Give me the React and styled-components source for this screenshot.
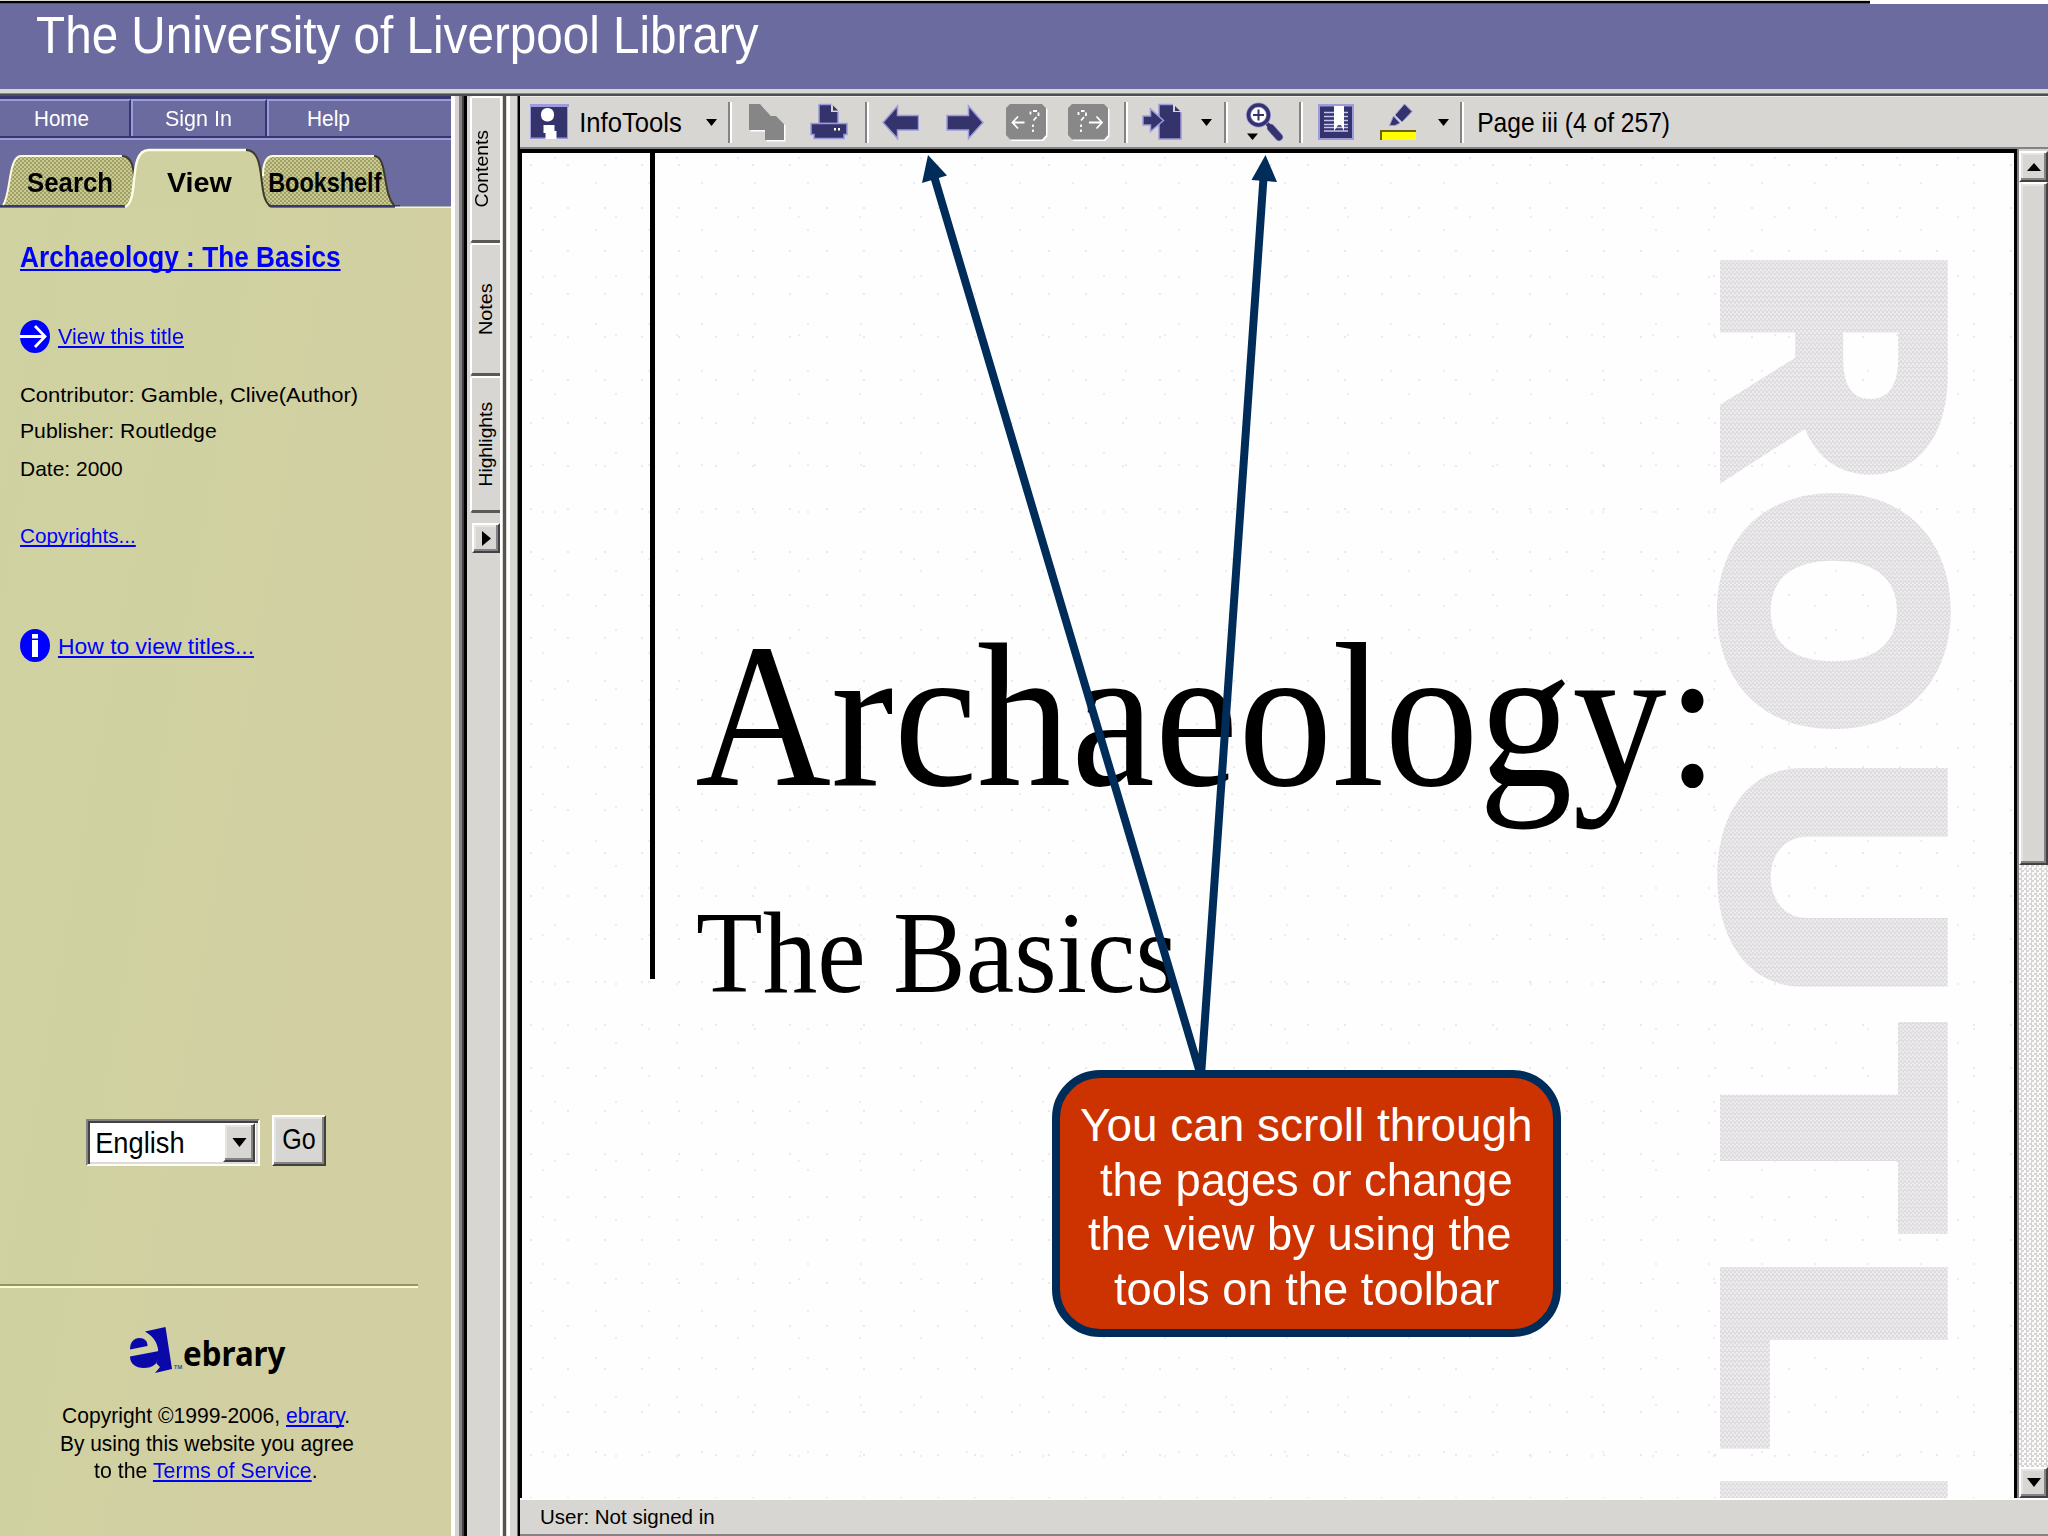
import React, { useLayoutEffect, useRef } from 'react'
import styled, { createGlobalStyle, css } from 'styled-components'

const NAVY = '#35336b'
const LILAC = '#9c9bdc'
const FACE = '#d8d6d2'
const PURPLE = '#6b6ba0'
const INK = '#002c5a'

const GlobalStyle = createGlobalStyle`
* {
    box-sizing: border-box;
}
body {
    margin: 0;
    width: 2048px;
    height: 1536px;
    overflow: hidden;
    font-family: 'Liberation Sans', Arial, sans-serif;
    color: #000000;
}
`

/* ---------- text squeezed to a fixed width ---------- */

const FitBox = styled.div`
flex: none;
width: ${props => props.$w}px;
height: ${props => props.$lh}px;
margin-top: ${props => props.$mt || 0}px;
margin-left: ${props => props.$ml || 0}px;
`
const FitText = styled.span`
display: inline-block;
white-space: pre;
transform-origin: 0 0;
font-size: ${props => props.$size}px;
line-height: ${props => props.$lh}px;
font-weight: ${props => props.$bold ? 700 : 400};
`

const Fit = ({ w, size, lh, mt, ml, bold, children }) => {
    const ref = useRef(null)
    useLayoutEffect(() => {
        const el = ref.current
        const cs = getComputedStyle(el)
        const ctx = document.createElement('canvas').getContext('2d')
        ctx.font = `${cs.fontWeight} ${cs.fontSize} ${cs.fontFamily}`
        const m = ctx.measureText(el.textContent)
        const k = w / (m.actualBoundingBoxLeft + m.actualBoundingBoxRight)
        el.style.transform = `translateX(${m.actualBoundingBoxLeft * k}px) scaleX(${k})`
    }, [w, children])
    return (
        <FitBox $w={w} $lh={lh} $mt={mt} $ml={ml}>
            <FitText ref={ref} $size={size} $lh={lh} $bold={bold}>{children}</FitText>
        </FitBox>
    )
}

/* ---------- page frame ---------- */

const Screen = styled.div`
position: relative;
display: flex;
flex-direction: column;
width: 2048px;
height: 1536px;
overflow: hidden;
background-color: ${FACE};
`
const TopEdge = styled.div`
height: 4px;
background: linear-gradient(#d9d9d4 0 1.5px, #000000 1.5px 3px, #55557c 3px) 0 0 / 1870px 4px no-repeat #ffffff;
`
const Header = styled.header`
height: 85px;
padding-top: 2px;
background-color: ${PURPLE};
color: #ffffff;
`
const Ridge = styled.div`
height: 7px;
background: linear-gradient(#d6d6d2 0 4px, #868884 4px 5.5px, #4c4f4c 5.5px 7px);
`
const Body = styled.div`
display: flex;
flex: 1;
min-height: 0;
`
const OuterDivider = styled.div`
width: 16px;
background: linear-gradient(90deg, #ffffff 0 4px, #d6d3d2 4px 8px, #848284 8px 11px, #424142 11px 13px, #000000 13px);
`
const InnerDivider = styled.div`
width: 18px;
background: linear-gradient(90deg, ${FACE} 0 1px, #55544f 1px 4px, ${FACE} 4px 5px, #ffffff 5px 8px, ${FACE} 8px 15px, #73716f 15px 16px, #000000 16px);
`

/* ---------- sidebar ---------- */

const Sidebar = styled.aside`
display: flex;
flex-direction: column;
width: 451px;
background: linear-gradient(100deg, #cfd3a0, #d2cfa3 80%);
`
const Nav = styled.nav`
display: flex;
height: 44px;
color: #ffffff;
background-color: ${PURPLE};
border-top: 3px solid #37376f;
border-bottom: 2px solid ${LILAC};
`
const NavItem = styled.div`
width: ${props => props.$w}px;
border-top: 2px solid ${LILAC};
border-bottom: 2px solid #37376f;
${props => !props.$last && css`
    border-right: 2px solid #37376f;
    box-shadow: 2px 0 0 ${LILAC};
`}
`
const TabBar = styled.div`
position: relative;
display: flex;
height: 68px;
background-color: ${PURPLE};
`
const TabShapes = styled.svg`
position: absolute;
left: 0;
top: 0;
`
const TabLabels = styled.div`
position: relative;
display: flex;
padding-left: 27px;
`
const Info = styled.div`
display: flex;
flex-direction: column;
padding-left: 20px;
`
const IconLink = styled.div`
display: flex;
height: 33px;
gap: 8px;
margin-top: ${props => props.$mt}px;
`
const Link = styled.a`
color: #0000ff;
text-decoration: underline;
text-decoration-thickness: 2px;
text-underline-offset: 2px;
text-decoration-skip-ink: none;
`
const LanguageForm = styled.div`
display: flex;
align-items: flex-end;
gap: 12px;
margin-top: 453px;
padding-left: 86px;
`
const Select = styled.div`
display: flex;
justify-content: space-between;
width: 174px;
height: 47px;
background-color: #ffffff;
border: 2px solid;
border-color: #848284 #ffffff #ffffff #848284;
box-shadow: inset 2px 2px 0 #424142, inset -2px -2px 0 #dedbd6;
padding: 2px 3px 2px 2px;
`
const Bevel = styled.div`
display: flex;
flex: none;
align-items: center;
justify-content: center;
width: ${props => props.$w}px;
height: ${props => props.$h}px;
background-color: ${FACE};
border: 2px solid;
border-color: #ffffff #424142 #424142 #ffffff;
box-shadow: inset -2px -2px 0 #848284, inset 2px 2px 0 #e6e4e0;
`
const Rule = styled.div`
width: 418px;
height: 4px;
margin-top: 118px;
background: linear-gradient(#94936a 0 2px, #fdfdc8 2px);
`
const Brand = styled.div`
display: flex;
height: 48px;
margin-top: 39px;
padding-left: 130px;
font-family: 'Noto Sans', 'Open Sans', sans-serif;
`
const Legal = styled.div`
margin-top: 28px;
`

/* ---------- rail with the vertical tabs ---------- */

const Rail = styled.div`
display: flex;
flex-direction: column;
width: 35px;
padding-left: 3px;
border-right: 2px solid #ffffff;
`
const RailTab = styled.div`
display: flex;
align-items: center;
justify-content: center;
width: 30px;
height: ${props => props.$h}px;
padding-right: ${props => props.$pr || 0}px;
border-left: 2px solid #ffffff;
border-top: 2px solid #ffffff;
border-bottom: 3px solid #5a5955;
border-radius: 3px 0 0 3px;
`
const Turned = styled.div`
flex: none;
transform: rotate(-90deg);
`
const RailButton = styled.div`
margin: 10px 0 0 2px;
`

/* ---------- main pane ---------- */

const Main = styled.main`
display: flex;
flex-direction: column;
width: 1528px;
`
const Toolbar = styled.div`
display: flex;
align-items: center;
height: 53px;
border-top: 1px solid #eeede9;
border-bottom: 2px solid #848284;
`
const Tool = styled.div`
display: flex;
flex: none;
margin-left: ${props => props.$ml}px;
`
const Separator = styled.div`
flex: none;
width: 4px;
height: 41px;
margin-left: ${props => props.$ml}px;
background: linear-gradient(90deg, #848284 0 2px, #ffffff 2px);
`
const Viewer = styled.div`
display: flex;
height: 1349px;
`
const Sheet = styled.div`
position: relative;
width: 1497px;
overflow: hidden;
border: solid #000000;
border-width: 4px 3px 0 2px;
background-color: #fefefe;
background-image:
    radial-gradient(circle at 9px 12px, #ebe9eb 0 1px, transparent 1.6px),
    radial-gradient(circle at 21px 30px, #efedef 0 1px, transparent 1.6px),
    radial-gradient(circle at 33px 5px, #efedef 0 1px, transparent 1.6px);
background-size: 37px 43px, 53px 47px, 61px 59px;
`
const TitleBlock = styled.div`
width: 133px;
height: 826px;
border-right: 5px solid #000000;
`
const Titles = styled.div`
position: absolute;
left: 175px;
top: 443px;
font-family: 'Liberation Serif', 'Times New Roman', serif;
`
const Imprint = styled.div`
position: absolute;
left: 1502px;
top: 107px;
display: flex;
transform-origin: 0 0;
transform: rotate(90deg);
font-family: Inter, sans-serif;
& span {
    font-weight: 900;
    color: transparent;
    background: repeating-conic-gradient(#dedcdf 0 25%, #efedf0 0 50%) 0 0 / 4px 4px;
    background-clip: text;
    -webkit-background-clip: text;
}
`
const ScrollBar = styled.div`
display: flex;
flex-direction: column;
width: 31px;
padding-top: 2px;
border-left: 2px solid #848284;
`
const Thumb = styled(Bevel)`
height: 683px;
`
const Track = styled.div`
flex: 1;
background: repeating-conic-gradient(#d9d5d4 0 25%, #fdfcfc 0 50%) 0 0 / 5px 5px;
`
const StatusBar = styled.footer`
height: 38px;
padding-left: 21px;
border-top: 2px solid #ffffff;
border-bottom: 2px solid #848284;
`

/* ---------- callout ---------- */

const Arrows = styled.svg`
position: absolute;
left: 0;
top: 0;
`
const Callout = styled.div`
position: absolute;
left: 1052px;
top: 1070px;
width: 509px;
height: 267px;
padding: 20px 0 0 21px;
color: #ffffff;
background-color: #cc3300;
border: 8px solid ${INK};
border-radius: 48px;
`

/* ---------- icons ---------- */

const Caret = ({ w = 11, h = 7 }) => (
    <svg width={w} height={h} viewBox="0 0 11 7"><path d="M0 0h11L5.5 7z" /></svg>
)

const ToolIcon = ({ w, children }) => (
    <svg width={w} height="40" viewBox={`0 0 ${w} 40`}>{children}</svg>
)

const InfoToolsIcon = () => (
    <ToolIcon w={39}>
        <path fill={LILAC} d="M0 2h39v3h-1v32H0z" />
        <path fill={NAVY} d="M1 5h36v30.500H1z" />
        <rect x="11" y="6" width="13" height="13.500" rx="6" fill="#fff" />
        <path fill="#fff" d="M13.500 23h11v6h2v8h-11v-6h-2z" />
    </ToolIcon>
)

const copyShape = 'M0 2h11l11 12h5l8 8v16H16V28H0z'
const CopyIcon = () => (
    <ToolIcon w={37}>
        <path fill="#fff" transform="translate(1.500 1.500)" d={copyShape} />
        <path fill="#868686" d={copyShape} />
    </ToolIcon>
)

const PrintIcon = () => (
    <ToolIcon w={38}>
        <g fill={NAVY} stroke={LILAC} strokeWidth="1.500">
            <path d="M9 2.500h12l7 7v12H9z" />
            <path d="M1 21.500h36v11h-3v4H4v-4H1z" />
        </g>
        <path fill={FACE} d="M21 2v8h8z" />
        <path fill={NAVY} d="M23 3.500v5h5z" />
        <path fill="#fff" d="M24 26h2v2.500h-2zM28 26h2v2.500h-2z" />
    </ToolIcon>
)

const BackIcon = () => (
    <ToolIcon w={37}>
        <path fill={NAVY} stroke={LILAC} strokeWidth="1.500" d="M1 20.500L15.500 4v9.500H36.500V28H15.500v8.500z" />
    </ToolIcon>
)

const ForwardIcon = () => (
    <ToolIcon w={38}>
        <path fill={NAVY} stroke={LILAC} strokeWidth="1.500" d="M37 20.500L22.500 4v9.500H1V28h21.500v8.500z" />
    </ToolIcon>
)

const boxShape = 'M4 2h32l4 4v27l-4 4.500H4L0 33V6z'
const QueryIcon = ({ forward }) => (
    <ToolIcon w={42}>
        <path fill="#fff" transform="translate(1.500 1.500)" d={boxShape} />
        <path fill="#888888" d={boxShape} />
        {forward
            ? <path fill="none" stroke="#fff" strokeWidth="1.800" d="M21 20.500h13M28.500 14.500l5.500 6-5.500 6M10.500 10v3M13 9h3.500M18 10.500v3.500M16 15l-3 3.500M13 22.500v2.500M13 27.500v2.500" />
            : <path fill="none" stroke="#fff" strokeWidth="1.800" d="M6.500 20.500h12M12 14.500l-5.500 6 5.500 6M24.500 9.500v3M27 9h4M32.500 10.500v3.500M30.500 15l-3 3.500M27 22.500v2.500M27 27.500v2.500" />}
    </ToolIcon>
)

const GotoIcon = () => (
    <ToolIcon w={40}>
        <path fill={NAVY} stroke={LILAC} strokeWidth="1.500" d="M17 2.500h14l8 8V37H17z" />
        <path fill={FACE} d="M31 1v9h9V1z" />
        <path fill={NAVY} d="M33 4v5h5z" />
        <path fill={NAVY} stroke={LILAC} strokeWidth="1.500" d="M1 14h7.500V7L21.500 18.500 8.500 29.500V23H1z" />
    </ToolIcon>
)

const ZoomIcon = () => (
    <ToolIcon w={38}>
        <path stroke={LILAC} strokeWidth="8.500" strokeLinecap="round" d="M25 26l8 9" />
        <path stroke={NAVY} strokeWidth="7" strokeLinecap="round" d="M25 26l8 9" />
        <path stroke={NAVY} strokeWidth="4" d="M19 19l5 6" />
        <circle cx="12.500" cy="13" r="10" fill="#fff" stroke={LILAC} strokeWidth="5" />
        <circle cx="12.500" cy="13" r="10" fill="none" stroke={NAVY} strokeWidth="3.500" />
        <path stroke={NAVY} strokeWidth="2" d="M7 13h11M12.500 7.500v11" />
        <path d="M1 31.500h11L6.500 38z" />
    </ToolIcon>
)

const BookmarkIcon = () => (
    <ToolIcon w={36}>
        <path fill={LILAC} d="M0 2h36v36H0z" />
        <path fill={NAVY} d="M2 4.500h32v31.500H2z" />
        <path stroke="#c4c4f2" strokeWidth="1.500" d="M6 10.500h24M6 14.500h24M6 18.500h24M6 22.500h24M6 25.500h24M6 29h24" />
        <path fill="#fff" d="M16 4h10v25l-3-6h-3l-4 6z" />
    </ToolIcon>
)

const HighlightIcon = () => (
    <ToolIcon w={36}>
        <path fill={NAVY} stroke={LILAC} strokeWidth="1" d="M24.500 2l7.500 7.500L22 20l-7-7z" />
        <path fill={NAVY} stroke={LILAC} strokeWidth="1" d="M13.500 14l6.500 7-5 2.500H9.500z" />
        <path fill="#6e6410" d="M0 28h36v10H0z" />
        <path fill="#ffff00" d="M2 30h34v8H2z" />
    </ToolIcon>
)

const GoCircle = () => (
    <svg width="30" height="33" viewBox="0 0 30 33">
        <ellipse cx="15" cy="16.500" rx="15" ry="16.500" fill="#0000ff" />
        <path fill="none" stroke="#fff" strokeWidth="2.800" d="M0 16.500h25M15 6l10 10.500L15 27" />
    </svg>
)

const InfoCircle = () => (
    <svg width="30" height="33" viewBox="0 0 30 33">
        <ellipse cx="15" cy="16.500" rx="15" ry="16.500" fill="#0000ff" />
        <path fill="#fff" d="M12 5h6v4.500h-6zM12 11h6v17h-6z" />
    </svg>
)

const BrandMark = () => (
    <svg width="54" height="48" viewBox="0 0 54 48">
        <g fill="#0a08a8">
            <path d="M15 4.500L35.500 0l6.500 42-17 4 5-6-3.500-3.500C30 27 30 13 15 4.500z" />
            <path d="M0 22.500C0 15 4 11 9.500 11c5 0 8 3 8 8z" />
            <path d="M0 29.500L29 24c0 8-2 11-3.500 13C22 40 18 41 13.500 41 6 41 0 37 0 29.500z" />
        </g>
        <text x="44" y="42" fontSize="5.500" fontWeight="700" fill="#4a4a9a">TM</text>
    </svg>
)

const TabArt = () => (
    <TabShapes width="451" height="68" viewBox="0 0 451 68">
        <defs>
            <pattern id="weave" width="4" height="4" patternUnits="userSpaceOnUse">
                <rect width="4" height="4" fill="#c8c993" />
                <path fill="#a09f64" d="M0 0h2v2H0zM2 2h2v2H2z" />
            </pattern>
        </defs>
        <path fill="#37376f" d="M0 65h400v2H0z" />
        <path fill="#f8f8cf" d="M395 66.500h56v1.500h-56z" />
        <path fill="url(#weave)" d="M3 65C11 55 8 16 21 16h101c8 0 12 8 12 24v25z" />
        <path fill="none" stroke="#fbfbdc" strokeWidth="2" d="M3 65C11 55 8 16 21 16h101" />
        <path fill="none" stroke="#3c3b2c" strokeWidth="2" d="M122 16c8 0 12 8 12 24" />
        <path fill="url(#weave)" d="M262 65V36c0-12 3-20 11-20h101c14 0 8 36 20 49z" />
        <path fill="none" stroke="#fbfbdc" strokeWidth="2" d="M263 36c0-12 3-20 10-20h101" />
        <path fill="none" stroke="#3c3b2c" strokeWidth="2" d="M374 16c14 0 8 36 20 49" />
        <path fill="#d0d1a1" d="M125 68c15-6 2-58 24-58h97c22 0 10 50 25 58z" />
        <path fill="none" stroke="#fdfde6" strokeWidth="2.500" d="M125 67c15-6 2-57 24-57h97" />
        <path fill="none" stroke="#3c3b2c" strokeWidth="2" d="M246 10c22 0 10 50 25 56" />
    </TabShapes>
)

const railTabs = [
    { name: 'Contents', h: 147, w: 77, pr: 9 },
    { name: 'Notes', h: 133, w: 50, pr: 1 },
    { name: 'Highlights', h: 137, w: 83, pr: 2 },
]

// turned letters of the publisher's name: drawn width and the gap before each
const imprint = [
    { letter: 'R', w: 224, gap: 0 },
    { letter: 'O', w: 240, gap: 8 },
    { letter: 'U', w: 223, gap: 36 },
    { letter: 'T', w: 220, gap: 27 },
    { letter: 'L', w: 185, gap: 29 },
    { letter: 'E', w: 185, gap: 29 },
]

const App = () => (
    <Screen>
        <GlobalStyle />
        <TopEdge />
        <Header>
            <Fit w={722} size={51} lh={60} ml={37}>The University of Liverpool Library</Fit>
        </Header>
        <Ridge />
        <Body>
            <Sidebar>
                <Nav>
                    <NavItem $w={131}><Fit w={53} size={21.5} lh={37} ml={35}>Home</Fit></NavItem>
                    <NavItem $w={136}><Fit w={66} size={21.5} lh={37} ml={34}>Sign In</Fit></NavItem>
                    <NavItem $w={184} $last><Fit w={42} size={21.5} lh={37} ml={41}>Help</Fit></NavItem>
                </Nav>
                <TabBar>
                    <TabArt />
                    <TabLabels>
                        <Fit w={85} size={28} lh={32} mt={27} bold>Search</Fit>
                        <Fit w={65} size={28} lh={32} mt={27} ml={55} bold>View</Fit>
                        <Fit w={113} size={28} lh={32} mt={27} ml={37} bold>Bookshelf</Fit>
                    </TabLabels>
                </TabBar>
                <Info>
                    <Fit w={320} size={30} lh={36} mt={31} bold><Link>Archaeology : The Basics</Link></Fit>
                    <IconLink $mt={45}>
                        <GoCircle />
                        <Fit w={125} size={21.5} lh={24} mt={4.5}><Link>View this title</Link></Fit>
                    </IconLink>
                    <Fit w={336} size={21} lh={24} mt={30} ml={1}>Contributor: Gamble, Clive(Author)</Fit>
                    <Fit w={195} size={21} lh={24} mt={12} ml={1}>Publisher: Routledge</Fit>
                    <Fit w={101} size={21} lh={24} mt={14} ml={1}>Date: 2000</Fit>
                    <Fit w={113} size={21} lh={24} mt={43} ml={1}><Link>Copyrights...</Link></Fit>
                    <IconLink $mt={81}>
                        <InfoCircle />
                        <Fit w={194} size={21.5} lh={24} mt={5.5} ml={1}><Link>How to view titles...</Link></Fit>
                    </IconLink>
                </Info>
                <LanguageForm>
                    <Select>
                        <Fit w={86} size={30} lh={36} ml={7} mt={2}>English</Fit>
                        <Bevel $w={32} $h={39}><Caret w={15} h={9} /></Bevel>
                    </Select>
                    <Bevel $w={54} $h={51}><Fit w={32} size={30} lh={36} mt={-4}>Go</Fit></Bevel>
                </LanguageForm>
                <Rule />
                <Brand>
                    <BrandMark />
                    <Fit w={102} size={34} lh={40} mt={6} bold>ebrary</Fit>
                </Brand>
                <Legal>
                    <Fit w={286} size={21.5} lh={27.5} ml={63}>Copyright ©1999-2006, <Link>ebrary</Link>.</Fit>
                    <Fit w={292} size={21.5} lh={27.5} ml={61}>By using this website you agree</Fit>
                    <Fit w={223} size={21.5} lh={27.5} ml={94}>to the <Link>Terms of Service</Link>.</Fit>
                </Legal>
            </Sidebar>
            <OuterDivider />
            <Rail>
                {railTabs.map(tab => (
                    <RailTab key={tab.name} $h={tab.h} $pr={tab.pr}>
                        <Turned><Fit w={tab.w} size={19} lh={20}>{tab.name}</Fit></Turned>
                    </RailTab>
                ))}
                <RailButton>
                    <Bevel $w={28} $h={30}>
                        <svg width="9" height="15" viewBox="0 0 9 15"><path d="M0 0l9 7.500L0 15z" /></svg>
                    </Bevel>
                </RailButton>
            </Rail>
            <InnerDivider />
            <Main>
                <Toolbar>
                    <Tool $ml={10}><InfoToolsIcon /></Tool>
                    <Fit w={100} size={27.5} lh={30} ml={12} mt={1}>InfoTools</Fit>
                    <Tool $ml={25}><Caret /></Tool>
                    <Separator $ml={11} />
                    <Tool $ml={17}><CopyIcon /></Tool>
                    <Tool $ml={24}><PrintIcon /></Tool>
                    <Separator $ml={17} />
                    <Tool $ml={13}><BackIcon /></Tool>
                    <Tool $ml={27}><ForwardIcon /></Tool>
                    <Tool $ml={22}><QueryIcon /></Tool>
                    <Tool $ml={20}><QueryIcon forward /></Tool>
                    <Separator $ml={14} />
                    <Tool $ml={14}><GotoIcon /></Tool>
                    <Tool $ml={19}><Caret /></Tool>
                    <Separator $ml={12} />
                    <Tool $ml={18}><ZoomIcon /></Tool>
                    <Separator $ml={15} />
                    <Tool $ml={15}><BookmarkIcon /></Tool>
                    <Tool $ml={26}><HighlightIcon /></Tool>
                    <Tool $ml={22}><Caret /></Tool>
                    <Separator $ml={11} />
                    <Fit w={190} size={27.5} lh={30} ml={15} mt={1}>Page iii (4 of 257)</Fit>
                </Toolbar>
                <Viewer>
                    <Sheet>
                        <TitleBlock />
                        <Titles>
                            <Fit w={1007} size={206} lh={240}>Archaeology:</Fit>
                            <Fit w={476} size={116} lh={130} mt={52} ml={1}>The Basics</Fit>
                        </Titles>
                        <Imprint>
                            {imprint.map(({ letter, w, gap }) => (
                                <Fit key={letter} w={w} size={313} lh={380} ml={gap}>{letter}</Fit>
                            ))}
                        </Imprint>
                    </Sheet>
                    <ScrollBar>
                        <Bevel $w={29} $h={31}><svg width="14" height="8" viewBox="0 0 14 8"><path d="M7 0l7 8H0z" /></svg></Bevel>
                        <Thumb $w={29} />
                        <Track />
                        <Bevel $w={29} $h={31}><Caret w={14} h={9} /></Bevel>
                    </ScrollBar>
                </Viewer>
                <StatusBar>
                    <Fit w={173} size={21} lh={34}>User: Not signed in</Fit>
                </StatusBar>
            </Main>
        </Body>
        <Arrows width="2048" height="1080" viewBox="0 0 2048 1080">
            <path fill="none" stroke={INK} strokeWidth="8" d="M1201 1076L934 176M1201 1076L1263.500 178" />
            <path fill={INK} d="M928 155l19 20.500-25 7.500zM1265.500 155l11.500 27-25.500-2z" />
        </Arrows>
        <Callout>
            <Fit w={449} size={46} lh={54.5}>You can scroll through</Fit>
            <Fit w={411} size={46} lh={54.5} ml={19}>the pages or change</Fit>
            <Fit w={422} size={46} lh={54.5} ml={7}>the view by using the</Fit>
            <Fit w={385} size={46} lh={54.5} ml={33}>tools on the toolbar</Fit>
        </Callout>
    </Screen>
)

export default App
